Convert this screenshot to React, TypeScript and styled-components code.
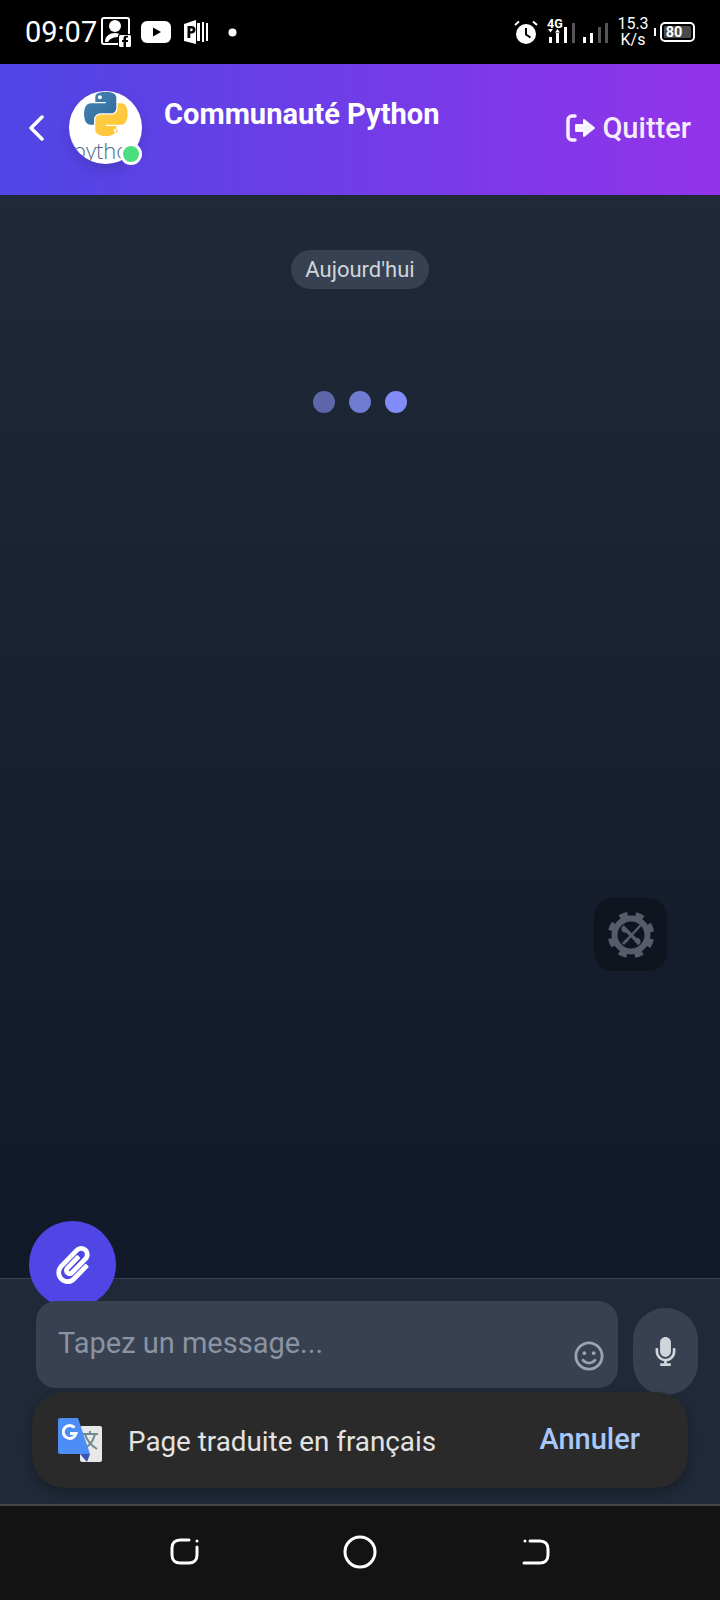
import styled, { createGlobalStyle } from "styled-components"
import { FaMicrophone, FaPaperclip, FaRegSmile } from "react-icons/fa"

const GlobalStyle = createGlobalStyle`
    html, body {
        margin: 0;
        padding: 0;
        background: #000;
    }

    * {
        box-sizing: border-box;
    }
`

const Screen = styled.div`
    position: relative;
    width: 720px;
    height: 1600px;
    display: flex;
    flex-direction: column;
    overflow: hidden;
    font-family: Roboto, "Liberation Sans", sans-serif;
`

const StatusBar = styled.div`
    height: 64px;
    flex-shrink: 0;
    background: #000;
    color: #fff;
    display: flex;
    align-items: center;
    justify-content: space-between;
    padding: 0 25px 0 25px;
`

const StatusGroup = styled.div`
    display: flex;
    align-items: center;
`

const Time = styled.span`
    font-size: 29px;
    font-weight: 400;
    line-height: 32px;
    width: 76px;
`

const Speed = styled.div`
    width: 34px;
    margin: 0 4px 0 7px;
    font-size: 16px;
    font-weight: 400;
    line-height: 16px;
    text-align: center;
`

const Header = styled.header`
    height: 131px;
    flex-shrink: 0;
    background: linear-gradient(90deg, #4f46e5, #9333ea);
    color: #fff;
    display: flex;
    align-items: flex-start;
    padding: 27px 29px 0 28px;
`

const BackIcon = styled.svg`
    width: 16px;
    height: 26px;
    margin: 24px 25px 0 0;
    flex-shrink: 0;
`

const AvatarWrap = styled.div`
    position: relative;
    width: 73px;
    height: 73px;
    flex-shrink: 0;
    border-radius: 50%;
    box-shadow: 0 6px 14px rgba(0, 0, 0, 0.14);
`

const AvatarImage = styled.div`
    width: 73px;
    height: 73px;
    padding-top: 1px;
    border-radius: 50%;
    background: #fff;
    overflow: hidden;
    display: flex;
    flex-direction: column;
    align-items: center;
`

const PythonWord = styled.span`
    margin: 3px 0 0 4px;
    font-family: "Open Sans", sans-serif;
    font-size: 22px;
    font-weight: 300;
    line-height: 22px;
    color: #4b6b8a;
    white-space: nowrap;
`

const OnlineDot = styled.span`
    position: absolute;
    right: 0;
    bottom: -1px;
    width: 22px;
    height: 22px;
    border-radius: 50%;
    background: #4ade80;
    border: 3px solid #fff;
`

const Title = styled.h1`
    flex: 1;
    margin: 6px 0 0 22px;
    font-size: 29.1px;
    font-weight: 700;
    line-height: 34px;
`

const LeaveButton = styled.div`
    display: flex;
    align-items: center;
    gap: 6px;
    margin-top: 20px;
    font-size: 29px;
    font-weight: 500;
    line-height: 34px;
    color: rgba(255, 255, 255, 0.92);
`

const ChatArea = styled.main`
    position: relative;
    flex: 1;
    background: linear-gradient(180deg, #1f2937, #111827);
    display: flex;
    flex-direction: column;
    align-items: center;
    padding-top: 55px;
`

const DatePill = styled.span`
    height: 39px;
    padding: 0 14px;
    border-radius: 20px;
    background: #374151;
    color: #d1d5db;
    font-size: 22px;
    line-height: 39px;
`

const Dots = styled.div`
    display: flex;
    gap: 14px;
    margin-top: 102px;
`

const Dot = styled.span<{ $color: string }>`
    width: 22px;
    height: 22px;
    border-radius: 50%;
    background: ${(p) => p.$color};
`

const ToolButton = styled.div`
    position: absolute;
    left: 594px;
    top: 703px;
    width: 73px;
    height: 73px;
    border-radius: 18px;
    background: #0f141f;
    display: flex;
    align-items: center;
    justify-content: center;
`

const Composer = styled.footer`
    position: relative;
    height: 226px;
    flex-shrink: 0;
    background: #1f2937;
    border-top: 1px solid #374151;
    display: flex;
    align-items: flex-start;
    gap: 15px;
    padding: 22px 22px 0 36px;
`

const AttachButton = styled.div`
    position: absolute;
    left: 29px;
    top: -58px;
    width: 87px;
    height: 87px;
    border-radius: 50%;
    background: #4f46e5;
    color: #fff;
    font-size: 38px;
    display: flex;
    align-items: center;
    justify-content: center;
`

const MessageBox = styled.div`
    position: relative;
    flex: 1;
    height: 87px;
    border-radius: 20px;
    background: #374151;
    padding: 26px 22px;
    color: #8b93a0;
    font-size: 29px;
    line-height: 32px;
`

const EmojiSlot = styled.span`
    position: absolute;
    right: 14px;
    bottom: 17px;
    color: #9ca3af;
    font-size: 30px;
    line-height: 0;
`

const MicButton = styled.div`
    width: 65px;
    height: 87px;
    margin-top: 7px;
    border-radius: 32px;
    background: #374151;
    color: #d1d5db;
    font-size: 29px;
    display: flex;
    align-items: center;
    justify-content: center;
`

const Snackbar = styled.div`
    position: absolute;
    left: 32px;
    top: 113px;
    width: 656px;
    height: 96px;
    border-radius: 32px;
    background: #2a2a2a;
    box-shadow: 0 4px 10px rgba(0, 0, 0, 0.25);
    display: flex;
    align-items: center;
    padding: 0 48px 0 26px;
`

const SnackText = styled.span`
    flex: 1;
    margin-left: 26px;
    padding-top: 2px;
    color: #e3e3e3;
    font-size: 27.8px;
`

const SnackAction = styled.span`
    color: #a8c7fa;
    font-size: 29px;
    font-weight: 500;
    padding-bottom: 3px;
`

const NavBar = styled.nav`
    height: 96px;
    flex-shrink: 0;
    background: #131313;
    border-top: 2px solid #444;
    display: flex;
    align-items: center;
    justify-content: center;
    gap: 140px;
    padding-bottom: 3px;
`

const NavIcon = styled.svg`
    width: 36px;
    height: 36px;
    fill: none;
    stroke: #fff;
    stroke-width: 3;
    stroke-linecap: round;
`

const ProfileIcon = () => (
    <svg width="31" height="30" viewBox="0 0 31 30" style={{ marginRight: 9 }}>
        <rect x="1" y="1" width="27" height="26" rx="2" fill="#000" stroke="#fff" strokeWidth="2" />
        <circle cx="14" cy="9" r="6" fill="#fff" />
        <path d="M4 25c0-6 5-9 10-9 3 0 5 1 7 2v2h-3c-4 0-9 1-11 5z" fill="#fff" />
        <rect x="17" y="17" width="14" height="13" rx="2" fill="#000" />
        <rect x="18" y="18" width="12" height="12" rx="1.500" fill="#fff" />
        <path d="M25 30v-5h2v-2h-2v-1.500c0-.6.3-.9 1-.9h1v-1.800h-2c-2 0-2.500 1.200-2.500 2.700v1.500h-1.500v2h1.500v5z" fill="#000" />
    </svg>
)

const YoutubeIcon = () => (
    <svg width="30" height="22" viewBox="0 0 30 22" style={{ marginRight: 13 }}>
        <rect width="30" height="22" rx="6" fill="#fff" />
        <path d="M12 6.500l8 4.500-8 4.500z" fill="#000" />
    </svg>
)

const PagesIcon = () => (
    <svg width="24" height="24" viewBox="0 0 24 24" style={{ marginRight: 20 }}>
        <path d="M0 4l12-4v24l-12-3z" fill="#fff" />
        <path d="M13 3h3v18h-3zM18 2h2v20h-2zM22 3h2v18h-2z" fill="#fff" />
        <path d="M3.500 18v-12h4c2.500 0 4 1.500 4 3.700s-1.500 3.800-4 3.800h-1.200v4.500z" fill="#000" />
        <path d="M6.300 8.500v2.700h1c1 0 1.400-.6 1.400-1.400s-.4-1.300-1.400-1.300z" fill="#fff" />
    </svg>
)

const AlarmIcon = () => (
    <svg width="24" height="24" viewBox="0 0 24 24">
        <circle cx="12" cy="14" r="10" fill="#fff" />
        <path d="M12 8v6.500l4.500 3" fill="none" stroke="#000" strokeWidth="2" />
        <path d="M1 5l4-3.500M23 5l-4-3.500" stroke="#fff" strokeWidth="2" />
    </svg>
)

const SignalIcon = () => (
    <svg width="62" height="28" viewBox="0 0 62 28" style={{ marginLeft: 9, overflow: "visible" }}>
        <text x="0" y="10" fontSize="12.500" fontWeight="700" fontFamily="Roboto, sans-serif" fill="#fff">4G</text>
        <path d="M1 11h5l-2.500 3.500zM8 14.500h5l-2.500-3.500z" fill="#fff" />
        <path d="M2 19h3v6h-3zM9 15h3v10h-3zM17 9h3v16h-3z" fill="#fff" />
        <path d="M25 5h3v20h-3z" fill="#555" />
        <path d="M36 19h3v6h-3zM43 15h3v10h-3z" fill="#fff" />
        <path d="M51 9h3v16h-3zM58 5h3v20h-3z" fill="#555" />
    </svg>
)

const BatteryIcon = () => (
    <svg width="41" height="20" viewBox="0 0 41 20">
        <rect x="0" y="6" width="2" height="8" fill="#fff" />
        <rect x="7" y="1" width="33" height="18" rx="4" fill="#000" stroke="#fff" strokeWidth="2" />
        <rect x="10" y="4" width="27" height="12" rx="1.500" fill="#4a4a4a" />
        <text x="20" y="15" textAnchor="middle" fontSize="14.500" fontWeight="700" fontFamily="Roboto, sans-serif" fill="#fff">80</text>
    </svg>
)

const PythonLogo = () => (
    <svg width="44" height="44" viewBox="0 0 112 112">
        <defs>
            <linearGradient id="pyBlue" x1="0" y1="0" x2="1" y2="1">
                <stop offset="0" stopColor="#4584b6" />
                <stop offset="1" stopColor="#306998" />
            </linearGradient>
            <linearGradient id="pyYellow" x1="0" y1="0" x2="1" y2="1">
                <stop offset="0" stopColor="#ffd04b" />
                <stop offset="1" stopColor="#ffc331" />
            </linearGradient>
        </defs>
        <path fill="url(#pyBlue)" d="M54.92.001C50.335.023 45.957.414 42.106 1.095 30.76 3.099 28.7 7.295 28.7 15.032V25.25h26.800v3.406H18.642c-7.788 0-14.608 4.681-16.742 13.586-2.460 10.207-2.569 16.576 0 27.234 1.906 7.934 6.456 13.588 14.244 13.588h9.213V70.820c0-8.845 7.654-16.648 16.749-16.648h26.769c7.451 0 13.400-6.135 13.400-13.619V15.032c0-7.264-6.128-12.721-13.400-13.937C64.271.329 59.494-.021 54.920.001zM40.427 8.219c2.768 0 5.029 2.297 5.029 5.122 0 2.815-2.261 5.091-5.029 5.091-2.778 0-5.029-2.276-5.029-5.091 0-2.825 2.251-5.122 5.029-5.122z" />
        <path fill="url(#pyYellow)" d="M85.638 28.657v11.896c0 9.223-7.819 16.986-16.763 16.986H42.106c-7.333 0-13.406 6.276-13.406 13.619v25.520c0 7.264 6.316 11.535 13.406 13.620 8.490 2.496 16.632 2.947 26.769 0 6.738-1.950 13.400-5.876 13.400-13.620V86.460H55.500v-3.396h40.176c7.788 0 10.690-5.432 13.399-13.588 2.798-8.396 2.679-16.471 0-27.234-1.925-7.749-5.601-13.585-13.399-13.585zM80.582 93.271c2.778 0 5.029 2.276 5.029 5.092 0 2.824-2.251 5.121-5.029 5.121-2.768 0-5.029-2.297-5.029-5.121 0-2.816 2.261-5.092 5.029-5.092z" />
    </svg>
)

const LeaveIcon = () => (
    <svg width="30" height="28" viewBox="0 0 30 28">
        <path d="M9 2H6a4 4 0 0 0-4 4v16a4 4 0 0 0 4 4h3" fill="none" stroke="currentColor" strokeWidth="3.500" strokeLinecap="round" />
        <path d="M10 11h8V6l10 8-10 8v-5h-8z" fill="currentColor" stroke="currentColor" strokeWidth="2" strokeLinejoin="round" />
    </svg>
)

const ToolsGear = () => (
    <svg width="48" height="48" viewBox="0 0 48 48">
        <circle cx="24" cy="24" r="16.500" fill="none" stroke="#555d6b" strokeWidth="6" />
        <circle cx="24" cy="24" r="21" fill="none" stroke="#555d6b" strokeWidth="4.500" strokeDasharray="8.250 8.240" strokeDashoffset="-4.120" />
        <path d="M33 15L18 31" stroke="#555d6b" strokeWidth="2.500" strokeLinecap="round" />
        <path d="M20 27l-5 5 2 2 5-5z" fill="#555d6b" />
        <path d="M18.500 18.500l12 12" stroke="#555d6b" strokeWidth="3.500" />
        <path d="M14.500 16.500a4 4 0 0 0 5 5l1-3.500-2.500-2.500-1-1.500z" fill="#555d6b" />
        <path d="M33.500 32a4 4 0 0 0-5-5l-1 3.500 2.500 2.500 1 1.500z" fill="#555d6b" />
    </svg>
)

const TranslateIcon = () => (
    <svg width="44" height="44" viewBox="0 0 44 44">
        <rect x="22" y="8" width="22" height="36" rx="2" fill="#e8e8e8" />
        <path d="M24 16h16M32 13v3M37 16c-2 8-7 13-12 15M27 16c2 7 7 12 12 15" fill="none" stroke="#6f8a8f" strokeWidth="2" />
        <path d="M2 0h18l12 36H2a2 2 0 0 1-2-2V2a2 2 0 0 1 2-2z" fill="#4d8df6" />
        <path d="M22 36h10l-3 8z" fill="#3a54b4" />
        <path d="M16.500 9.500a6.500 6.500 0 1 0 1.500 6h-6" fill="none" stroke="#fff" strokeWidth="3" />
    </svg>
)

export default function App() {
    return (
        <Screen>
            <GlobalStyle />

            <StatusBar>
                <StatusGroup>
                    <Time>09:07</Time>
                    <ProfileIcon />
                    <YoutubeIcon />
                    <PagesIcon />
                    <svg width="9" height="9" viewBox="0 0 9 9"><circle cx="4.500" cy="4.500" r="4" fill="#fff" /></svg>
                </StatusGroup>
                <StatusGroup>
                    <AlarmIcon />
                    <SignalIcon />
                    <Speed>15.3<br />K/s</Speed>
                    <BatteryIcon />
                </StatusGroup>
            </StatusBar>

            <Header>
                <BackIcon viewBox="0 0 16 26" fill="none" stroke="#fff" strokeWidth="3.500" strokeLinecap="round" strokeLinejoin="round">
                    <path d="M14 2L3 13l11 11" />
                </BackIcon>
                <AvatarWrap>
                    <AvatarImage>
                        <PythonLogo />
                        <PythonWord>python</PythonWord>
                    </AvatarImage>
                    <OnlineDot />
                </AvatarWrap>
                <Title>Communauté Python</Title>
                <LeaveButton>
                    <LeaveIcon />
                    Quitter
                </LeaveButton>
            </Header>

            <ChatArea>
                <DatePill>Aujourd'hui</DatePill>
                <Dots>
                    <Dot $color="#5c66a8" />
                    <Dot $color="#6f7bd0" />
                    <Dot $color="#818cf8" />
                </Dots>
                <ToolButton>
                    <ToolsGear />
                </ToolButton>
            </ChatArea>

            <Composer>
                <AttachButton>
                    <FaPaperclip />
                </AttachButton>
                <MessageBox>
                    Tapez un message...
                    <EmojiSlot>
                        <FaRegSmile />
                    </EmojiSlot>
                </MessageBox>
                <MicButton>
                    <FaMicrophone />
                </MicButton>
                <Snackbar>
                    <TranslateIcon />
                    <SnackText>Page traduite en français</SnackText>
                    <SnackAction>Annuler</SnackAction>
                </Snackbar>
            </Composer>

            <NavBar>
                <NavIcon viewBox="0 0 36 36">
                    <path d="M31 13v8c0 5-3 8-8 8h-9c-5 0-8-3-8-8v-7c0-5 3-8 8-8h9" />
                    <path d="M31 7v.1" />
                </NavIcon>
                <NavIcon viewBox="0 0 36 36">
                    <circle cx="18" cy="18" r="15" />
                </NavIcon>
                <NavIcon viewBox="0 0 36 36">
                    <path d="M12 7h10c5 0 8 3 8 8v6c0 5-3 8-8 8H6" />
                    <path d="M7 7v.1" />
                </NavIcon>
            </NavBar>
        </Screen>
    )
}
